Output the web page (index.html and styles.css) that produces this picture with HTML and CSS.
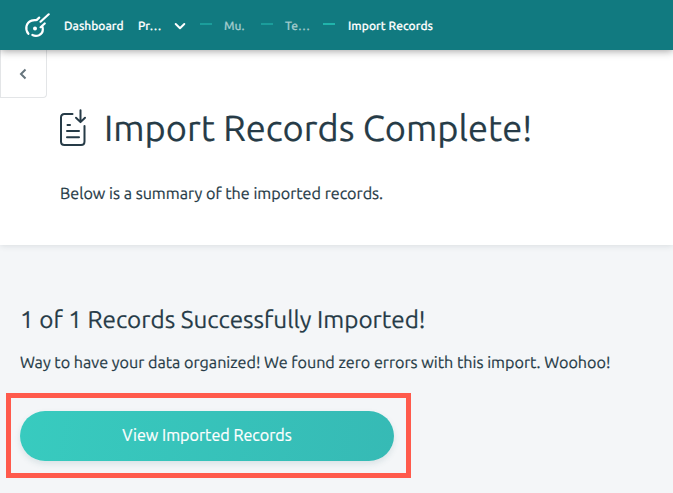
FILE: index.html
```html
<!DOCTYPE html>
<html lang="en">
<head>
<meta charset="utf-8">
<title>Import Records</title>
<link rel="stylesheet" href="styles.css">
</head>
<body>
<nav class="topbar">
  <svg class="logo" viewBox="0 0 26 26" fill="none" stroke="currentColor" stroke-width="2.2" stroke-linecap="round" stroke-linejoin="round">
    <path d="M4.400 21.800C.6 17.300 2 10.500 7.600 8.600c2-.7 3.600-.3 5.200-.7L15.200 5.600"/>
    <path d="M16.500 9.700L24.700 2.300M16.600 15.200l4.100-3.700M18.400 14.500c1.200 4.400-.4 7.300-3.400 8.700-2.300 1-4.500.8-6.600-.2"/>
    <circle cx="11" cy="16.600" r="2" fill="currentColor" stroke="none"/>
  </svg>
  <a class="crumb dashboard">Dashboard</a>
  <a class="crumb project">Pr…</a>
  <svg class="chevron" viewBox="0 0 12 8" fill="none" stroke="currentColor" stroke-width="2" stroke-linecap="round" stroke-linejoin="round"><path d="M1.700 2L6 6.200 10.300 2"/></svg>
  <span class="dash"></span>
  <a class="crumb muted first">Mu.</a>
  <span class="dash"></span>
  <a class="crumb muted second">Te…</a>
  <span class="dash bright"></span>
  <a class="crumb current">Import Records</a>
</nav>
<header class="hero">
  <button class="back" aria-label="Back"><svg viewBox="0 0 8 12" fill="none" stroke="currentColor" stroke-width="2"><path d="M6.500 1.500L2 6l4.500 4.500"/></svg></button>
  <div class="heading">
    <svg class="doc" viewBox="0 0 28 38" fill="none" stroke="currentColor" stroke-width="2" stroke-linecap="round" stroke-linejoin="round">
      <path d="M13.500 5H5.500Q2 5 2 8.500v24Q2 36 5.500 36H22Q25.500 36 25.500 32.500V17M21.500 1.300v11.500M17 8.700l4.500 4.400 4.500-4.400M8.500 16h2.500M8 22h12M8 28.200h12"/>
    </svg>
    <h1>Import Records Complete!</h1>
  </div>
  <p class="intro">Below is a summary of the imported records.</p>
</header>
<main>
  <h2>1 of 1 Records Successfully Imported!</h2>
  <p class="message">Way to have your data organized! We found zero errors with this import. Woohoo!</p>
  <div class="highlight"><button class="view"><span>View Imported Records</span></button></div>
</main>
</body>
</html>
```
FILE: styles.css
```css
* { box-sizing: border-box; }
body {
  margin: 0;
  width: 673px;
  height: 493px;
  overflow: hidden;
  background: #f4f6f8;
  color: #263b47;
  font-family: Ubuntu, "Noto Sans", sans-serif;
  text-rendering: geometricPrecision;
  -webkit-text-stroke: .2px currentColor;
}
h1, h2, p { margin: 0; font-weight: 400; white-space: nowrap; }
button { font: inherit; }
svg { display: block; flex: none; }

.topbar {
  position: relative;
  z-index: 1;
  display: flex;
  align-items: center;
  height: 50px;
  padding: 2px 0 0 24px;
  background: #117a80;
  color: #fff;
  box-shadow: 0 1px 8px rgba(0, 0, 0, .38);
}
.logo { width: 26px; height: 26px; margin: -2px 14px 0 0; }
.crumb { flex: none; margin-top: 2px; font-size: 12px; font-weight: 500; line-height: 20px; white-space: nowrap; }
.dashboard { width: 74px; }
.project { width: 36px; }
.chevron { width: 12px; height: 8px; margin: -1px 14px 0 0; }
.dash { flex: none; width: 12px; height: 2px; margin: -4px 12px 0 0; background: #1b9d9b; }
.bright { margin-right: 13px; background: #20b4ab; }
.muted { color: #a1cbcd; }
.first { width: 37px; }
.second { width: 38px; }
.current { letter-spacing: .04px; }

.hero {
  height: 195px;
  background: #fff;
  box-shadow: 0 1px 6px rgba(30, 50, 60, .12);
}
.back {
  display: grid;
  place-items: center;
  width: 47px;
  height: 48px;
  padding: 0 2px 0 0;
  border: 1px solid #e3e5e7;
  border-top: 0;
  border-radius: 0 0 4px 0;
  background: #fff;
  color: #66757d;
}
.back svg { width: 8px; height: 12px; }
.heading { display: flex; align-items: center; height: 62px; padding-left: 59px; }
.doc { width: 28px; height: 38px; margin: -2px 17px 0 0; }
h1 { font-size: 36.250px; line-height: 44px; margin-top: -2px; }
.intro { padding: 22px 0 0 60px; font-size: 16.150px; line-height: 24px; }

main { padding: 58px 0 0 20px; }
h2 { font-size: 24.250px; line-height: 32px; }
.message { margin-top: 16px; font-size: 16.150px; line-height: 24px; }
.highlight {
  width: 405px;
  height: 85px;
  margin: 18px 0 0 -14px;
  padding: 13px 12px 0 9px;
  border: 5px solid #ff5a4c;
}
.view {
  display: block;
  width: 374px;
  height: 50px;
  padding: 0 0 2px;
  border: 0;
  border-radius: 25px;
  background: linear-gradient(100deg, #38cbbf, #36bab5);
  box-shadow: 0 3px 6px rgba(35, 90, 100, .12);
  color: #fff;
  font-size: 16.150px;
}
```
